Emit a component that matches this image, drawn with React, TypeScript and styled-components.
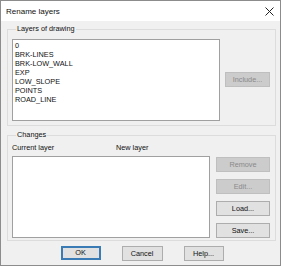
import React from "react";
import styled, { createGlobalStyle } from "styled-components";

const Global = createGlobalStyle`
  html, body { margin: 0; padding: 0; background: #ffffff; }
  * { box-sizing: border-box; }
`;

const Window = styled.div`
  width: 281px;
  height: 266px;
  border: 1px solid #8c8c8c;
  background: #f0f0f0;
  display: flex;
  flex-direction: column;
  font-family: "Liberation Sans", Arial, sans-serif;
  font-size: 7.3px;
  color: #111;
  overflow: hidden;
`;

const TitleBar = styled.div`
  height: 20px;
  background: #ffffff;
  display: flex;
  align-items: center;
  justify-content: space-between;
  padding: 0 6px 0 5px;
  flex: none;
`;

const Title = styled.span`
  font-size: 8px;
  line-height: 10px;
  margin-top: 1px;
`;

const Body = styled.div`
  flex: 1;
  display: flex;
  flex-direction: column;
  padding: 3px 4px 0 6px;
`;

const Group = styled.fieldset<{ $mt?: number; $pt?: number; $pb?: number }>`
  margin: ${(p) => p.$mt ?? 0}px 0 0 0;
  border: 1px solid #dcdcdc;
  padding: ${(p) => p.$pt ?? 5}px 5px ${(p) => p.$pb ?? 4}px 4px;
  min-width: 0;
`;

const Legend = styled.legend`
  padding: 0 1px;
  margin-left: 4px;
  line-height: 10px;
  height: 10px;
`;

const Row = styled.div`
  display: flex;
  align-items: flex-start;
`;

const ListBox = styled.div<{ $w: number; $h: number }>`
  width: ${(p) => p.$w}px;
  height: ${(p) => p.$h}px;
  background: #ffffff;
  border: 1px solid #a0a0a0;
  padding: 1px 2px;
  flex: none;
`;

const Item = styled.div`
  height: 9px;
  line-height: 9px;
  white-space: nowrap;
`;

const Button = styled.button<{ $w: number; $disabled?: boolean; $default?: boolean }>`
  width: ${(p) => p.$w}px;
  height: ${(p) => (p.$default ? 14 : 15)}px;
  padding: 0;
  margin: 0;
  font-family: "Liberation Sans", Arial, sans-serif;
  font-size: 7.3px;
  line-height: 10px;
  color: ${(p) => (p.$disabled ? "#8a8a8a" : "#111")};
  background: ${(p) => (p.$disabled ? "#cccccc" : "#e1e1e1")};
  border: ${(p) =>
    p.$default ? "2px solid #3a7bb5" : p.$disabled ? "1px solid #bfbfbf" : "1px solid #adadad"};
  border-radius: 0;
  flex: none;
`;

const SideColumn = styled.div<{ $mt: number; $gap: number }>`
  display: flex;
  flex-direction: column;
  gap: ${(p) => p.$gap}px;
  margin-top: ${(p) => p.$mt}px;
  margin-left: auto;
`;

const HeaderRow = styled.div`
  display: flex;
  height: 10px;
  line-height: 10px;
  margin-bottom: 3px;
`;

const HeaderCell = styled.span<{ $w: number }>`
  width: ${(p) => p.$w}px;
  flex: none;
`;

const Footer = styled.div`
  display: flex;
  justify-content: center;
  gap: 21px;
  margin-top: 5px;
  padding-left: 1px;
`;

const CloseIcon = () => (
  <svg width="9" height="9" viewBox="0 0 9 9">
    <path d="M0.5 0.5 L8.5 8.5 M8.5 0.5 L0.5 8.5" stroke="#222" strokeWidth="1" fill="none" />
  </svg>
);

const layers = ["0", "BRK-LINES", "BRK-LOW_WALL", "EXP", "LOW_SLOPE", "POINTS", "ROAD_LINE"];

export default function App() {
  return (
    <>
      <Global />
      <Window>
        <TitleBar>
          <Title>Rename layers</Title>
          <CloseIcon />
        </TitleBar>
        <Body>
          <Group>
            <Legend>Layers of drawing</Legend>
            <Row>
              <ListBox $w={208} $h={82}>
                {layers.map((l) => (
                  <Item key={l}>{l}</Item>
                ))}
              </ListBox>
              <SideColumn $mt={33} $gap={0}>
                <Button $w={45} $disabled>
                  Include...
                </Button>
              </SideColumn>
            </Row>
          </Group>
          <Group $mt={4} $pt={3} $pb={2}>
            <Legend>Changes</Legend>
            <HeaderRow>
              <HeaderCell $w={104}>Current layer</HeaderCell>
              <HeaderCell $w={80}>New layer</HeaderCell>
            </HeaderRow>
            <Row>
              <ListBox $w={198} $h={82} />
              <SideColumn $mt={1} $gap={7}>
                <Button $w={54} $disabled>
                  Remove
                </Button>
                <Button $w={54} $disabled>
                  Edit...
                </Button>
                <Button $w={54}>Load...</Button>
                <Button $w={54}>Save...</Button>
              </SideColumn>
            </Row>
          </Group>
          <Footer>
            <Button $w={40} $default>
              OK
            </Button>
            <Button $w={41}>Cancel</Button>
            <Button $w={40}>Help...</Button>
          </Footer>
        </Body>
      </Window>
    </>
  );
}
